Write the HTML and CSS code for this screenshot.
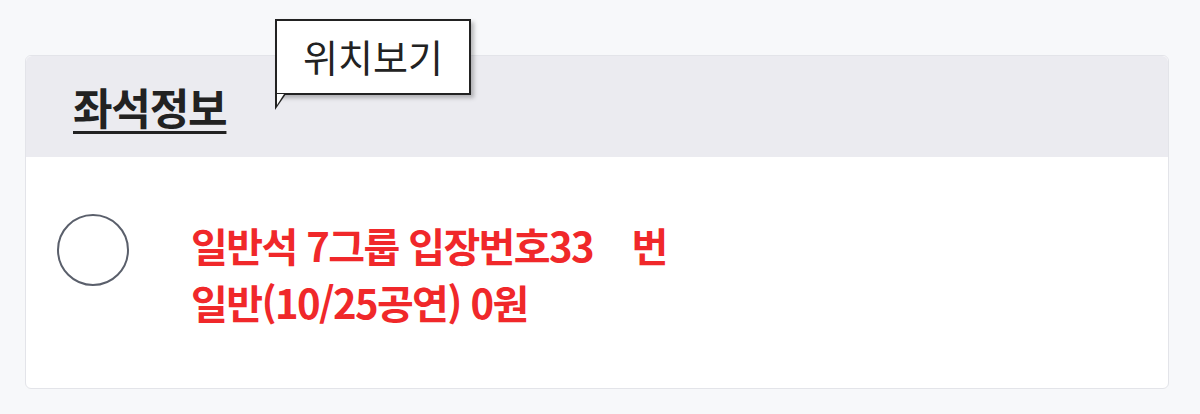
FILE: index.html
```html
<!DOCTYPE html>
<html lang="ko">
<head>
<meta charset="utf-8">
<link rel="stylesheet" href="styles.css">
</head>
<body>
<section class="card">
  <header class="card-head">
    <h2 class="title">좌석정보</h2>
    <div class="tooltip">위치보기<span class="tail"></span></div>
  </header>
  <div class="card-body">
    <span class="radio"></span>
    <div class="seat">
      <p class="line">일반석 7그룹 입장번호33    번</p>
      <p class="line">일반(10/25공연) 0원</p>
    </div>
  </div>
</section>
</body>
</html>
```
FILE: styles.css
```css
html, body {
  margin: 0;
  padding: 0;
}
body {
  background: #f7f8fa;
  width: 1200px;
  height: 414px;
  font-family: "Noto Sans CJK KR", "Noto Sans", sans-serif;
  padding-top: 55px;
  box-sizing: border-box;
  overflow: hidden;
}
.card {
  position: relative;
  margin-left: 25px;
  width: 1144px;
  height: 334px;
  box-sizing: border-box;
  border: 1px solid #e3e4e9;
  border-radius: 6px;
  background: #fff;
  overflow: visible;
}
.card-head {
  height: 101px;
  background: #ebebf0;
  border-radius: 6px 6px 0 0;
  display: flex;
  align-items: center;
  padding-left: 47px;
}
.title {
  margin: 0 0 2px;
  font-size: 43px;
  font-weight: 700;
  color: #222;
  text-decoration: underline;
  text-decoration-thickness: 3px;
  text-underline-offset: 6px;
  letter-spacing: -1.2px;
}
.tooltip {
  position: absolute;
  left: 249px;
  top: -37px;
  width: 196px;
  height: 76px;
  box-sizing: border-box;
  border: 2px solid #222;
  background: #fff;
  font-size: 38px;
  color: #222;
  display: flex;
  align-items: center;
  justify-content: center;
  padding-bottom: 4px;
  box-shadow: 3px 3px 4px rgba(0,0,0,0.25);
}
.tail {
  position: absolute;
  left: -2px;
  top: 74px;
  width: 0;
  height: 0;
  border-left: 2px solid #222;
}
.tail::before {
  content: "";
  position: absolute;
  left: -2px;
  top: -1px;
  width: 0;
  height: 0;
  border-top: 16px solid #222;
  border-right: 11px solid transparent;
}
.tail::after {
  content: "";
  position: absolute;
  left: 0;
  top: -1px;
  width: 0;
  height: 0;
  border-top: 11px solid #fff;
  border-right: 7px solid transparent;
}
.card-body {
  display: flex;
  align-items: flex-start;
  padding: 57px 0 0 31px;
}
.radio {
  width: 72px;
  height: 72px;
  box-sizing: border-box;
  border: 2px solid #5a5f6b;
  border-radius: 50%;
  flex: none;
}
.seat {
  margin-left: 62px;
  margin-top: 3px;
}
.line {
  margin: 0;
  font-size: 40px;
  line-height: 57px;
  font-weight: 700;
  color: #f0282a;
  letter-spacing: -1.6px;
  white-space: pre;
}
```
